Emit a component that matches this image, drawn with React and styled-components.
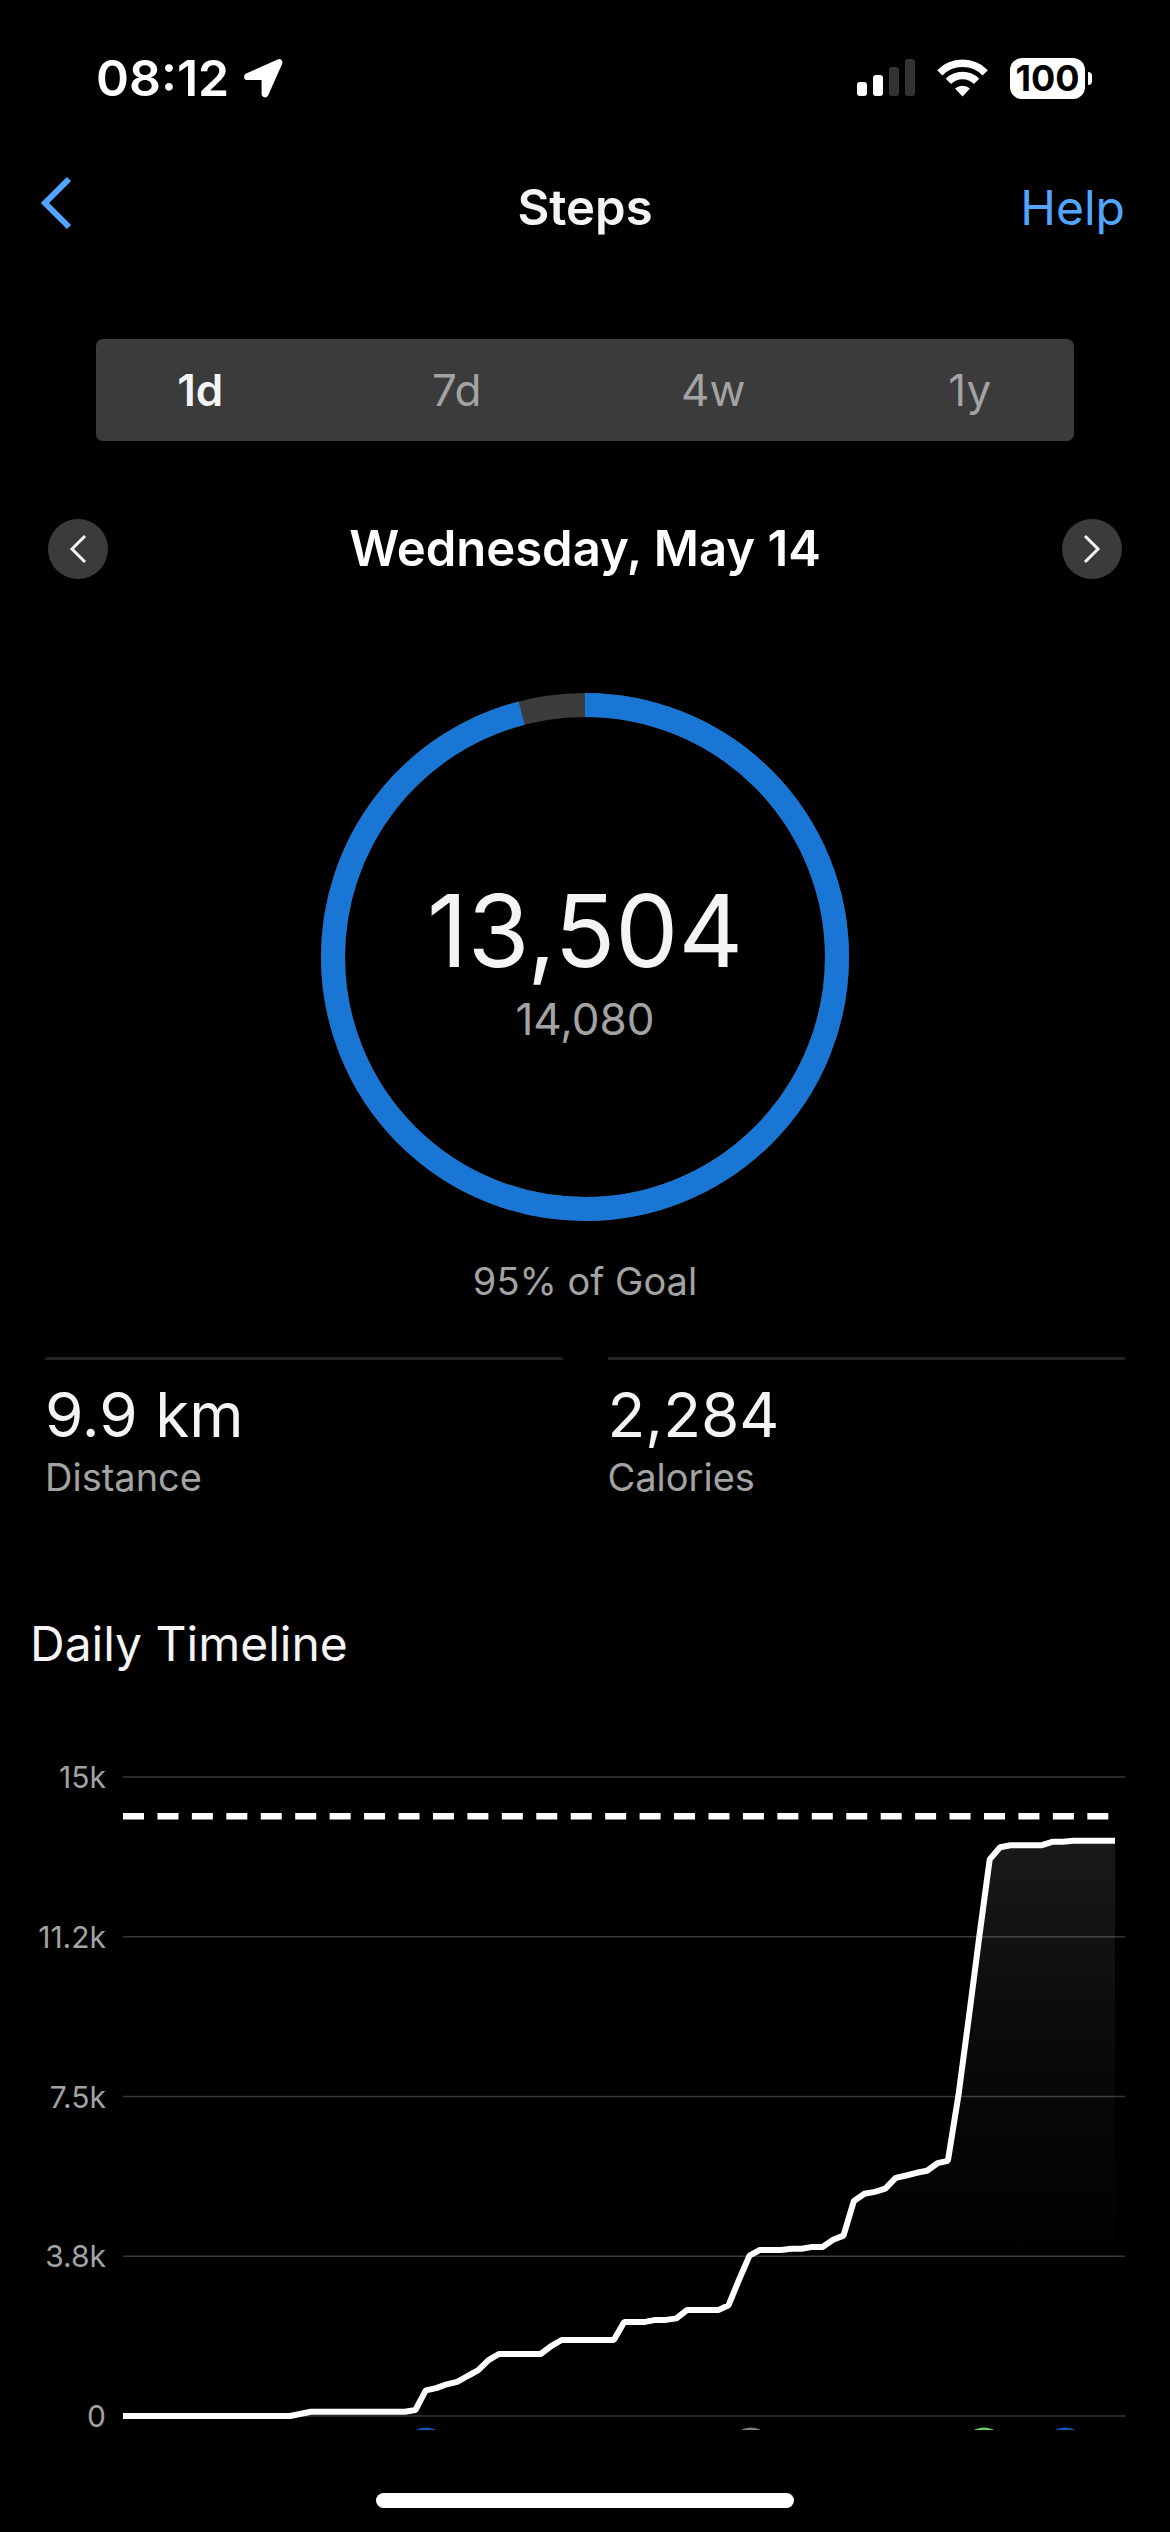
import React, { useState } from "react";
import styled, { createGlobalStyle } from "styled-components";

const Global = createGlobalStyle`
  *, *::before, *::after { box-sizing: border-box; }
  body {
    margin: 0;
    background: #000;
    color: #f4f4f4;
    font-family: Inter, "Liberation Sans", sans-serif;
    font-size: 48px;
  }
  button { font: inherit; color: inherit; background: none; border: 0; padding: 0; cursor: pointer; }
  h1, h2, p, dl, dd, dt, figure { margin: 0; font-weight: inherit; font-size: inherit; }
`;

const Screen = styled.div`
  display: flex;
  flex-direction: column;
  overflow: hidden;
`;

const StatusBar = styled.div`
  display: flex;
  align-items: center;
  justify-content: space-between;
  padding: 48px 78px 0 96px;
  height: 108px;
  color: #fff;
`;

const StatusGroup = styled.div`
  display: flex;
  align-items: center;
  gap: ${(p) => p.$gap}px;
`;

const Clock = styled.time`
  font-size: 50px;
  line-height: 60px;
  font-weight: 600;
`;

const Battery = styled.div`
  display: flex;
  align-items: center;
  gap: 3px;
`;

const BatteryBody = styled.span`
  width: 75px;
  height: 41px;
  border-radius: 12px;
  background: #fff;
  color: #000;
  font-size: 36px;
  font-weight: 700;
  line-height: 41px;
  text-align: center;
`;

const BatteryCap = styled.span`
  width: 4px;
  height: 13px;
  border-radius: 0 6px 6px 0;
  background: #fff;
`;

const NavBar = styled.header`
  display: grid;
  grid-template-columns: 1fr auto 1fr;
  align-items: center;
  height: 120px;
  margin-top: 40px;
  padding: 0 45px;
`;

const Title = styled.h1`
  font-size: 49px;
  font-weight: 600;
  line-height: 60px;
`;

const BackButton = styled.button`
  justify-self: start;
  display: flex;
  padding-bottom: 10px;
`;

const HelpLink = styled.a`
  justify-self: end;
  color: #51a5ff;
  line-height: 60px;
  text-decoration: none;
`;

const Segments = styled.nav`
  display: flex;
  gap: 48px;
  margin: 71px 96px 0;
  height: 102px;
  border-radius: 7px;
  background: #3b3b3b;
`;

const Segment = styled.button`
  flex: 1;
  font-size: 44px;
  font-weight: ${(p) => (p.$active ? 600 : 400)};
  color: ${(p) => (p.$active ? "#f4f4f4" : "#a3a3a3")};
`;

const DateRow = styled.div`
  display: flex;
  align-items: center;
  justify-content: space-between;
  margin: 78px 48px 0;
`;

const DateLabel = styled.h2`
  color: #fff;
  font-size: 49px;
  font-weight: 600;
  line-height: 60px;
`;

const RoundButton = styled.button`
  display: flex;
  align-items: center;
  justify-content: center;
  width: 60px;
  height: 60px;
  border-radius: 50%;
  background: #3b3b3b;
`;

const Goal = styled.section`
  display: flex;
  flex-direction: column;
  align-items: center;
  gap: 36px;
  margin-top: 114px;
`;

const Dial = styled.div`
  display: grid;
  place-items: center;
  width: 528px;
  height: 528px;
  > * { grid-area: 1 / 1; }
`;

const DialText = styled.div`
  display: flex;
  flex-direction: column;
  align-items: center;
  padding-top: 8px;
`;

const StepCount = styled.strong`
  font-size: 100px;
  font-weight: 400;
  line-height: 116px;
`;

const StepGoal = styled.span`
  font-size: 44px;
  line-height: 60px;
  color: #a3a3a3;
`;

const Caption = styled.p`
  font-size: 38px;
  line-height: 48px;
  color: #a3a3a3;
`;

const Stats = styled.dl`
  display: grid;
  grid-template-columns: 1fr 1fr;
  gap: 45px;
  margin: 52px 45px 0;
`;

const Stat = styled.div`
  display: flex;
  flex-direction: column-reverse;
  border-top: 3px solid #232323;
  padding-top: 17px;
`;

const StatValue = styled.dd`
  font-size: 62px;
  line-height: 76px;
`;

const StatLabel = styled.dt`
  font-size: 38px;
  line-height: 48px;
  color: #a3a3a3;
`;

const SectionTitle = styled.h2`
  margin: 113px 30px 0;
  line-height: 60px;
`;

const Chart = styled.figure`
  display: grid;
  grid-template-columns: 75px 1fr;
  column-gap: 17px;
  margin: 89px 45px 0 31px;
`;

const Axis = styled.div`
  display: flex;
  flex-direction: column;
  justify-content: space-between;
  align-items: flex-end;
  font-size: 30px;
  line-height: 28px;
  color: #a3a3a3;
`;

const Plot = styled.svg`
  display: block;
  width: 100%;
  height: auto;
  overflow: hidden;
`;

const HomeBar = styled.div`
  align-self: center;
  width: 418px;
  height: 15px;
  margin: 63px 0 24px;
  border-radius: 8px;
  background: #fff;
`;

const RANGES = ["1d", "7d", "4w", "1y"];
const AXIS = ["15k", "11.2k", "7.5k", "3.8k", "0"];
const MAX = 15000;
const STEPS = 13504;
const GOAL = 14080;

/* Cumulative steps as [quarter-hour index, total]. */
const TIMELINE = [
  [0, 0], [16, 0], [18, 100], [27, 100], [28, 140], [29, 600], [30, 655], [31, 745],
  [32, 800], [33, 940], [34, 1070], [35, 1310], [36, 1455], [40, 1455], [41, 1640],
  [42, 1785], [47, 1785], [48, 2210], [50, 2210], [51, 2255], [52, 2255], [53, 2290],
  [54, 2485], [57, 2485], [58, 2600], [59, 3205], [60, 3765], [61, 3900], [63, 3900],
  [64, 3925], [65, 3925], [66, 3970], [67, 3970], [68, 4135], [69, 4235], [70, 5050],
  [71, 5215], [72, 5260], [73, 5335], [74, 5590], [75, 5645], [76, 5710], [77, 5755],
  [78, 5935], [79, 5990], [80, 7520], [81, 9350], [82, 11255], [83, 13065], [84, 13350],
  [85, 13400], [88, 13400], [89, 13480], [90, 13480], [91, 13504], [95, 13504],
];

/* Activity badges under the time axis; only their tops show above the fold. */
const EVENTS = [
  { x: 303, color: "#0a56b5" },
  { x: 628, color: "#7d7d7d" },
  { x: 861, color: "#5fd068" },
  { x: 942, color: "#0a56b5" },
];

const PAD = 14;
const PLOT_H = 639;
const plotY = (v) => PAD + PLOT_H * (1 - v / MAX);
const LINE = TIMELINE.map(([i, v]) => `${((i * 992) / 95).toFixed(1)},${plotY(v).toFixed(1)}`).join(" ");

const ChevronSvg = styled.svg`
  overflow: visible;
`;

function Chevron({ flip, width, height, stroke, color }) {
  const tip = flip ? width : 0;
  const end = width - tip;
  return (
    <ChevronSvg width={width} height={height} aria-hidden="true">
      <polyline
        points={`${end},0 ${tip},${height / 2} ${end},${height}`}
        fill="none"
        stroke={color}
        strokeWidth={stroke}
      />
    </ChevronSvg>
  );
}

function LocationArrow() {
  return (
    <svg width="40" height="40" viewBox="0 0 40 40" aria-hidden="true">
      <path d="M4.5 18.7 36 4.5 22 36V18.7Z" fill="#fff" stroke="#fff" strokeWidth="6.8" strokeLinejoin="round" />
    </svg>
  );
}

function Signal() {
  return (
    <svg width="58" height="38" aria-hidden="true">
      <rect x="0" y="23" width="10" height="14" rx="3" fill="#fff" />
      <rect x="16" y="16" width="10" height="21" rx="3" fill="#fff" />
      <rect x="32" y="8" width="10" height="29" rx="3" fill="#333" />
      <rect x="48" y="0" width="10" height="37" rx="3" fill="#333" />
    </svg>
  );
}

function Wifi() {
  return (
    <svg width="51" height="38" viewBox="0 0 51 38" aria-hidden="true">
      <g fill="none" stroke="#fff" strokeWidth="7.5">
        <path d="M2.8 13.8A32 32 0 0 1 48.2 13.8" />
        <path d="M11.4 22.4A20 20 0 0 1 39.6 22.4" />
      </g>
      <path d="M25.5 37.4 18 29.6A11 11 0 0 1 33 29.6Z" fill="#fff" />
    </svg>
  );
}

function Ring() {
  const r = 252;
  const len = 2 * Math.PI * r;
  return (
    <svg width="528" height="528" viewBox="0 0 528 528" aria-hidden="true">
      <circle cx="264" cy="264" r={r} fill="none" stroke="#3c3c3c" strokeWidth="24" />
      <circle
        cx="264"
        cy="264"
        r={r}
        fill="none"
        stroke="#1a76d4"
        strokeWidth="24"
        strokeDasharray={`${(len * STEPS) / GOAL} ${len}`}
        transform="rotate(-90 264 264)"
      />
    </svg>
  );
}

export default function App() {
  const [range, setRange] = useState("1d");
  return (
    <Screen>
      <Global />
      <StatusBar>
        <StatusGroup $gap={14}>
          <Clock>08:12</Clock>
          <LocationArrow />
        </StatusGroup>
        <StatusGroup $gap={22}>
          <Signal />
          <Wifi />
          <Battery>
            <BatteryBody>100</BatteryBody>
            <BatteryCap />
          </Battery>
        </StatusGroup>
      </StatusBar>

      <NavBar>
        <BackButton aria-label="Back">
          <Chevron width={24} height={48} stroke={6} color="#51a5ff" />
        </BackButton>
        <Title>Steps</Title>
        <HelpLink href="#help">Help</HelpLink>
      </NavBar>

      <Segments aria-label="Range">
        {RANGES.map((r) => (
          <Segment key={r} $active={r === range} aria-pressed={r === range} onClick={() => setRange(r)}>
            {r}
          </Segment>
        ))}
      </Segments>

      <DateRow>
        <RoundButton aria-label="Previous day">
          <Chevron width={13} height={26} stroke={3} color="#f4f4f4" />
        </RoundButton>
        <DateLabel>Wednesday, May 14</DateLabel>
        <RoundButton aria-label="Next day">
          <Chevron flip width={13} height={26} stroke={3} color="#f4f4f4" />
        </RoundButton>
      </DateRow>

      <Goal>
        <Dial>
          <Ring />
          <DialText>
            <StepCount>13,504</StepCount>
            <StepGoal>14,080</StepGoal>
          </DialText>
        </Dial>
        <Caption>95% of Goal</Caption>
      </Goal>

      <Stats>
        <Stat>
          <StatLabel>Distance</StatLabel>
          <StatValue>9.9 km</StatValue>
        </Stat>
        <Stat>
          <StatLabel>Calories</StatLabel>
          <StatValue>2,284</StatValue>
        </Stat>
      </Stats>

      <SectionTitle>Daily Timeline</SectionTitle>
      <Chart>
        <Axis>
          {AXIS.map((t) => (
            <span key={t}>{t}</span>
          ))}
        </Axis>
        <Plot viewBox="0 0 1002 667" role="img" aria-label="Cumulative steps over the day">
          <defs>
            <linearGradient id="fade" x1="0" y1="0" x2="0" y2="1">
              <stop offset="0" stopColor="#fff" stopOpacity="0.1" />
              <stop offset="0.17" stopColor="#fff" stopOpacity="0.07" />
              <stop offset="0.44" stopColor="#fff" stopOpacity="0.028" />
              <stop offset="0.72" stopColor="#fff" stopOpacity="0.005" />
              <stop offset="1" stopColor="#fff" stopOpacity="0" />
            </linearGradient>
          </defs>
          {AXIS.map((t, i) => (
            <line
              key={t}
              x1="0"
              x2="1002"
              y1={PAD + (PLOT_H * i) / 4}
              y2={PAD + (PLOT_H * i) / 4}
              stroke="#383838"
              strokeWidth="1.5"
            />
          ))}
          <polygon points={`${LINE} 992,${plotY(0)} 0,${plotY(0)}`} fill="url(#fade)" />
          <line
            x1="0"
            x2="992"
            y1={plotY(GOAL)}
            y2={plotY(GOAL)}
            stroke="#fff"
            strokeWidth="6.5"
            strokeDasharray="21 13.44"
          />
          <polyline points={LINE} fill="none" stroke="#fff" strokeWidth="6" strokeLinejoin="bevel" />
          {EVENTS.map((e) => (
            <circle key={e.x} cx={e.x} cy="685.5" r="21" fill={e.color} />
          ))}
        </Plot>
      </Chart>
      <HomeBar />
    </Screen>
  );
}
